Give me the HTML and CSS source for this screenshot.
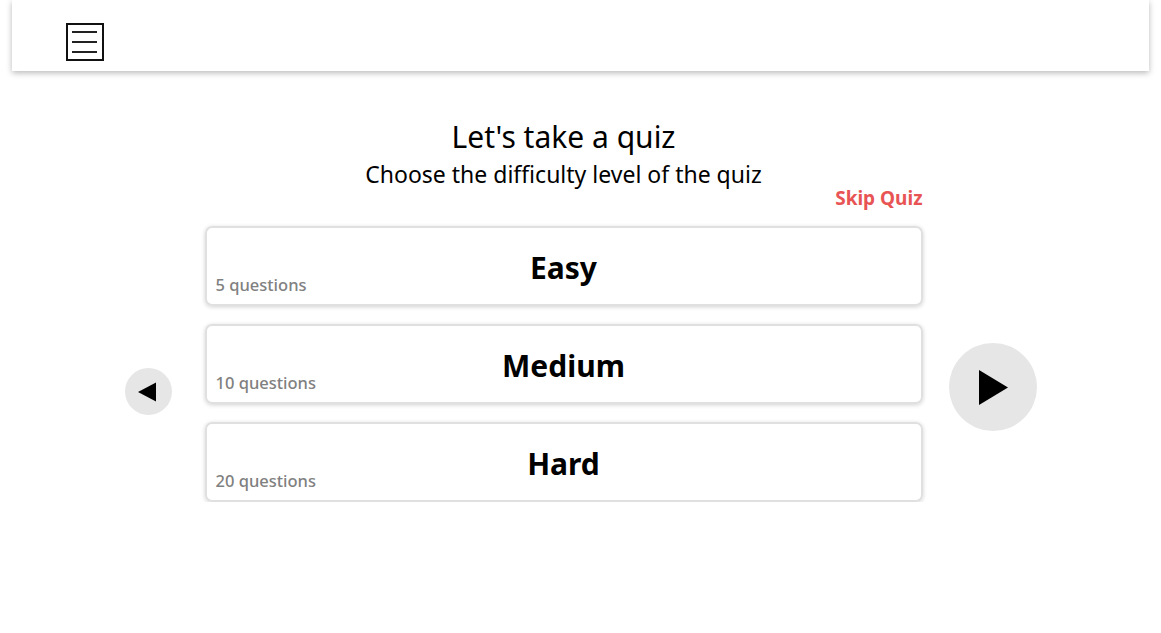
FILE: index.html
```html
<!DOCTYPE html>
<html>
<head>
<meta charset="utf-8">
<link rel="stylesheet" href="styles.css">
</head>
<body>
<header class="topbar">
  <button class="menu-btn" aria-label="Menu">
    <span class="menu-line"></span>
    <span class="menu-line"></span>
    <span class="menu-line"></span>
  </button>
</header>
<main class="quiz-row">
  <button class="nav-btn nav-prev" aria-label="Previous">
    <svg width="20" height="20" viewBox="0 0 20 20"><polygon points="1,10 19,0.5 19,19.5" fill="#000"/></svg>
  </button>
  <section class="quiz-col">
    <h1 class="title">Let's take a quiz</h1>
    <p class="subtitle">Choose the difficulty level of the quiz</p>
    <div class="skip-wrap"><a class="skip" href="#">Skip Quiz</a></div>
    <div class="cards">
      <div class="card"><span class="card-title">Easy</span><span class="card-count">5 questions</span></div>
      <div class="card"><span class="card-title">Medium</span><span class="card-count">10 questions</span></div>
      <div class="card"><span class="card-title">Hard</span><span class="card-count">20 questions</span></div>
    </div>
  </section>
  <button class="nav-btn nav-next" aria-label="Next">
    <svg width="30" height="35" viewBox="0 0 30 35"><polygon points="0,0 29,17.5 0,35" fill="#000"/></svg>
  </button>
</main>
</body>
</html>
```
FILE: styles.css
```css
* { box-sizing: border-box; }
html, body { margin: 0; padding: 0; background: #fff; }
body { font-family: "Noto Sans", "Open Sans", sans-serif; color: #000; }

.topbar {
  width: 98%;
  margin: 0 auto;
  height: 71px;
  background: #fff;
  box-shadow: 0 2px 6px rgba(0,0,0,0.28);
  display: flex;
  align-items: center;
  padding-left: 54px;
}
.menu-btn {
  width: 38px;
  height: 38px;
  border: 2px solid #111;
  background: #fff;
  padding: 0;
  margin-top: 13px;
  display: flex;
  flex-direction: column;
  align-items: center;
  justify-content: center;
  gap: 8px;
}
.menu-line {
  display: block;
  width: 25px;
  height: 2px;
  background: #222;
}

.quiz-row {
  display: flex;
  justify-content: center;
  align-items: flex-start;
  padding-top: 47px;
}
.quiz-col {
  width: 718px;
  margin: 0 26px 0 33px;
}
.title {
  margin: 0;
  text-align: center;
  font-weight: 400;
  font-size: 30px;
  line-height: 38px;
}
.subtitle {
  margin: 4px 0 0;
  text-align: center;
  font-size: 23px;
  line-height: 28px;
}
.skip-wrap {
  text-align: right;
  height: 38px;
  line-height: 20px;
}
.skip {
  color: #e85454;
  font-weight: 700;
  font-size: 19px;
  text-decoration: none;
}
.cards {
  display: flex;
  flex-direction: column;
  gap: 18px;
}
.card {
  position: relative;
  height: 80px;
  border: 2px solid #e0e0e0;
  border-radius: 7px;
  box-shadow: 0 1px 4px rgba(0,0,0,0.18);
  display: flex;
  flex-direction: column;
  justify-content: center;
  align-items: center;
  padding-top: 4px;
}
.card-title {
  font-weight: 700;
  font-size: 30px;
  line-height: 38px;
}
.card-count {
  position: absolute;
  left: 9px;
  bottom: 8px;
  font-size: 16.5px;
  color: #808080;
  font-weight: 500;
}
.nav-btn {
  border: none;
  border-radius: 50%;
  background: #e6e6e6;
  display: flex;
  align-items: center;
  justify-content: center;
  padding: 0;
}
.nav-prev {
  width: 47px;
  height: 47px;
  margin-top: 250px;
}
.nav-next {
  width: 88px;
  height: 88px;
  margin-top: 225px;
}
.nav-next svg { margin-left: 2px; }
.nav-prev svg { margin-right: 2px; }
```
